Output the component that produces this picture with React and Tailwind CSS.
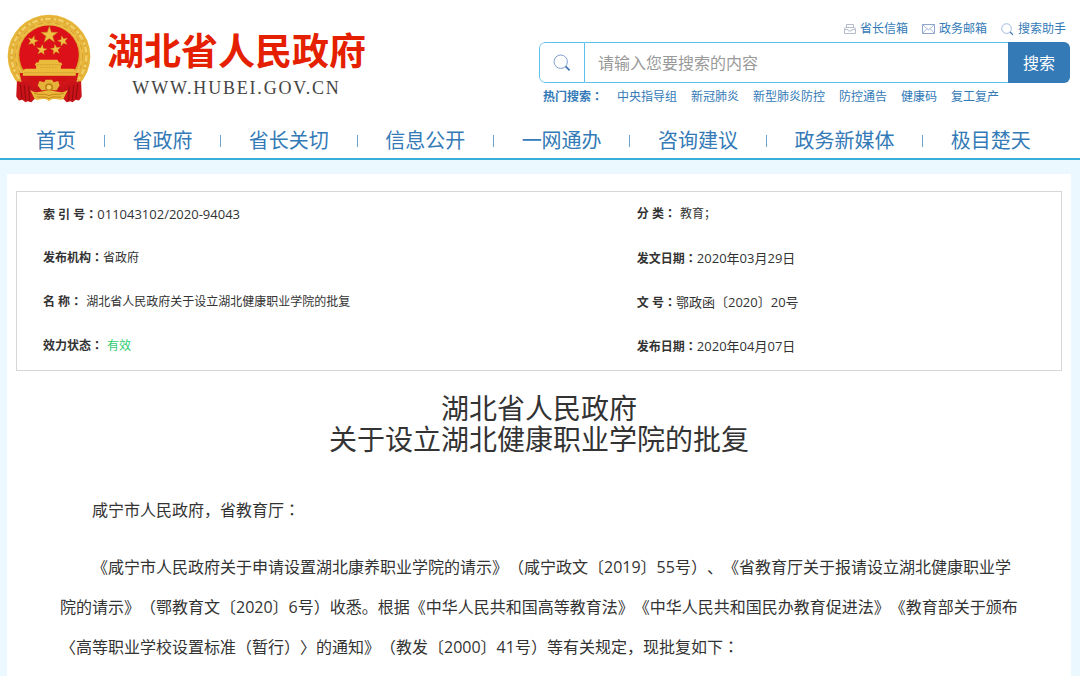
import { useState } from "react";

const NAV_ITEMS = [
    "首页",
    "省政府",
    "省长关切",
    "信息公开",
    "一网通办",
    "咨询建议",
    "政务新媒体",
    "极目楚天",
];

const HOT_WORDS = [
    "中央指导组",
    "新冠肺炎",
    "新型肺炎防控",
    "防控通告",
    "健康码",
    "复工复产",
];

const META = [
    { label: "索 引 号", value: "011043102/2020-94043", numeric: true },
    { label: "分 类", value: "教育；", spaced: true },
    { label: "发布机构", value: "省政府" },
    { label: "发文日期", value: "2020年03月29日", numeric: true },
    {
        label: "名 称",
        value: "湖北省人民政府关于设立湖北健康职业学院的批复",
        spaced: true,
    },
    { label: "文 号", value: "鄂政函〔2020〕20号", numeric: true },
    { label: "效力状态", value: "有效", spaced: true, valid: true },
    { label: "发布日期", value: "2020年04月07日", numeric: true },
];

const STAR =
    "M0-10 2.35-3.24 9.51-3.09 3.8 1.24 5.88 8.09 0 4 -5.88 8.09 -3.8 1.24 -9.51-3.09 -2.35-3.24Z";

// Full-width colon, centred in its em box
function Colon() {
    return (
        <span className="font-['Noto_Sans_CJK_TC','Noto_Sans_CJK_SC',sans-serif] leading-none">
            ：
        </span>
    );
}

function SearchIcon({ className }) {
    return (
        <svg viewBox="0 0 18 18" fill="none" className={className}>
            <circle cx="7.7" cy="7.7" r="6.7" stroke="#7f9fd0" />
            <path d="M12.6 12.4 16.6 16.4" stroke="#3f73b5" strokeWidth="1.7" />
        </svg>
    );
}

function DrawerIcon() {
    return (
        <svg viewBox="0 0 12 12" fill="none" className="size-3">
            <path
                d="M2.5 4V1.5h7V4M1.5 4.5h9M.5 6.5h3.3l.7 1.4h3l.7-1.4h3.3v4H.5z"
                stroke="#b4bccb"
            />
            <path d="M1 4.5.5 6.5M11 4.5l.5 2" stroke="#b4bccb" />
        </svg>
    );
}

function MailIcon() {
    return (
        <svg viewBox="0 0 13 10" fill="none" className="h-[10px] w-[13px]">
            <path d="M.5.5h12v9H.5z" stroke="#8fa6cc" />
            <path
                d="M.8.8 6.5 6 12.2.8M.8 9.2l4-4.6M12.2 9.2l-4-4.6"
                stroke="#8fa6cc"
                strokeWidth="0.8"
            />
        </svg>
    );
}

function Emblem() {
    return (
        <svg
            viewBox="20 27 254 268"
            className="h-[89px] w-[84px] shrink-0"
            role="img"
            aria-label="国徽"
        >
            <defs>
                <radialGradient id="gold" cx="0.5" cy="0.5" r="0.5">
                    <stop offset="0.68" stopColor="#c98f12" />
                    <stop offset="0.78" stopColor="#eec04a" />
                    <stop offset="0.9" stopColor="#e0ab30" />
                    <stop offset="1" stopColor="#e8b93c" />
                </radialGradient>
            </defs>
            <circle cx="147" cy="154" r="125" fill="url(#gold)" />
            {/* Wheat ears */}
            <circle
                cx="147"
                cy="154"
                r="113"
                fill="none"
                stroke="#f2cf68"
                strokeWidth="7"
                strokeDasharray="17 9 8 6"
            />
            <circle
                cx="147"
                cy="154"
                r="101"
                fill="none"
                stroke="#d09c2a"
                strokeWidth="3"
                strokeDasharray="14 12"
            />
            <ellipse cx="147" cy="150" rx="90" ry="89" fill="#dc1018" />
            <path d="M58 205h178l-14 62H72z" fill="#d01519" />
            {/* Stars */}
            <g fill="#efc044" stroke="#bb7311" strokeWidth="0.5">
                <path d={STAR} transform="translate(148 90) scale(2.7)" />
                <path d={STAR} transform="translate(98 108) rotate(15) scale(1.7)" />
                <path d={STAR} transform="translate(189 108) rotate(-15) scale(1.7)" />
                <path d={STAR} transform="translate(125 135) rotate(8) scale(1.7)" />
                <path d={STAR} transform="translate(167 134) rotate(-8) scale(1.7)" />
            </g>
            {/* Gate tower */}
            <path
                d="M118 165h55l4 8h7l3 8-4 2v9h37l8 4v17H68v-17l8-4h32v-9l-4-2 4-8h7z"
                fill="#edbb3c"
            />
            <path
                d="M109 180h75M70 204h158"
                stroke="#cf982a"
                strokeWidth="2"
                fill="none"
            />
            <path d="M120 188h54" stroke="#cf982a" strokeWidth="2" strokeDasharray="5 4" />
            <path d="M80 214h136l-14 14H94z" fill="#cf1116" />
            {/* Drapes */}
            <path
                d="M50 230l28 3 30 15 26-8-8 40-24 4-8 9-12-3-6 3-10-7-10 2-8-12z"
                fill="#c91318"
            />
            <path
                d="M244 230l-28 3-30 15-26-8 8 40 24 4 8 9 12-3 6 3 10-7 10 2 8-12z"
                fill="#c91318"
            />
            <path
                d="M60 238l6 46M72 242l5 46M86 246l2 42M234 238l-6 46M222 242l-5 46M208 246l-2 42"
                stroke="#8f0a0e"
                strokeWidth="3"
                fill="none"
            />
            {/* Cog and wheat stalks */}
            <path
                d="M118 229l14 4 5-8 19 0 5 8 14-4 4 14-9 14h-46l-11-14z"
                fill="#e5b138"
            />
            <circle cx="147" cy="248" r="12" fill="#bd8117" />
            <circle cx="147" cy="248" r="7" fill="#f3cb56" />
            <path
                d="M90 256c20 14 38 2 57 2s37 12 57-2l-14 28c-16 6-28-8-43 6-15-14-27 0-43-6z"
                fill="#e9b83b"
            />
            <path
                d="M102 266c18 8 30-2 45 8 15-10 27 0 45-8M110 277c14 3 26-4 37 6 11-10 23-3 37-6"
                stroke="#bb7a12"
                strokeWidth="2.5"
                fill="none"
            />
        </svg>
    );
}

function SiteHeader() {
    const [keyword, setKeyword] = useState("");

    return (
        <header className="border-b-2 border-[#36aeda] bg-white">
            <div className="flex justify-between gap-4 pr-[10px] pl-[7px]">
                <a href="#" className="flex gap-4 pt-[14px]">
                    <Emblem />
                    <span className="flex flex-col items-center pt-3">
                        <span className="text-[37px] leading-[50px] font-bold whitespace-nowrap text-[#e42000]">
                            湖北省人民政府
                        </span>
                        <span className="font-['Liberation_Serif',serif] text-lg leading-6 tracking-widest text-[#444]">
                            WWW.HUBEI.GOV.CN
                        </span>
                    </span>
                </a>

                <div className="w-[531px] pt-5 text-xs text-[#337ab7]">
                    <div className="flex items-center justify-end gap-[14px] pr-1 leading-[18px]">
                        <a href="#" className="flex items-center gap-1">
                            <DrawerIcon />
                            省长信箱
                        </a>
                        <a href="#" className="flex items-center gap-1">
                            <MailIcon />
                            政务邮箱
                        </a>
                        <a href="#" className="flex items-center gap-1">
                            <SearchIcon className="size-[13px]" />
                            搜索助手
                        </a>
                    </div>

                    {/* Search box */}
                    <form
                        onSubmit={(e) => e.preventDefault()}
                        className="mt-1 flex h-[41px] overflow-hidden rounded-md"
                    >
                        <label
                            htmlFor="keyword"
                            aria-label="搜索"
                            className="flex w-[46px] items-center justify-center rounded-l-md border border-[#5dbfee]"
                        >
                            <SearchIcon className="size-[18px]" />
                        </label>
                        <input
                            id="keyword"
                            type="text"
                            value={keyword}
                            placeholder="请输入您要搜索的内容"
                            onChange={(e) => setKeyword(e.target.value)}
                            className="min-w-0 flex-1 border-y border-[#5dbfee] px-[13px] text-base outline-none placeholder:text-[#999]"
                        />
                        <button
                            type="submit"
                            className="w-[62px] bg-[#337ab7] text-base text-white"
                        >
                            搜索
                        </button>
                    </form>

                    <div className="mt-1 flex items-baseline gap-[14px] pl-1 leading-5">
                        <span className="font-bold">
                            热门搜索
                            <Colon />
                        </span>
                        {HOT_WORDS.map((word) => (
                            <a key={word} href="#">
                                {word}
                            </a>
                        ))}
                    </div>
                </div>
            </div>

            <nav className="mt-5 flex items-center justify-between pr-[49px] pb-[3px] pl-9 text-xl leading-[28px] text-[#337ab7]">
                {NAV_ITEMS.map((item, i) => [
                    i > 0 && (
                        <span
                            key={`${item}-line`}
                            className="h-3 w-px bg-[#6ea4d0]"
                        />
                    ),
                    <a key={item} href="#">
                        {item}
                    </a>,
                ])}
            </nav>
        </header>
    );
}

function MetaBox() {
    return (
        <dl className="grid grid-cols-[7fr_5fr] border border-[#d6d6d6] py-px pl-[26px] text-xs leading-[42px]">
            {META.map(({ label, value, numeric, spaced, valid }) => (
                <div key={label} className="flex h-11 items-baseline">
                    <dt className="font-bold">
                        {label}
                        <Colon />
                    </dt>
                    <dd
                        className={[
                            numeric && "text-[13px]",
                            spaced && "pl-1",
                            valid && "text-[#2ecc71]",
                        ]
                            .filter(Boolean)
                            .join(" ")}
                    >
                        {value}
                    </dd>
                </div>
            ))}
        </dl>
    );
}

export default function App() {
    return (
        <div className="min-h-screen bg-[#ebf8ff] font-['Open_Sans','Noto_Sans_CJK_SC',sans-serif] text-[#333] [text-spacing-trim:space-all]">
            <SiteHeader />

            <div className="pt-[14px] pr-[9px] pl-[7px]">
                <main className="min-h-[502px] bg-white px-[9px] pt-[17px]">
                    <MetaBox />

                    <h1 className="mt-[22px] text-center text-[28px] leading-[31px]">
                        湖北省人民政府
                        <br />
                        关于设立湖北健康职业学院的批复
                    </h1>

                    <div className="mt-[35px] pr-10 pl-11 text-base leading-10">
                        <p className="indent-8">
                            咸宁市人民政府，省教育厅
                            <Colon />
                        </p>
                        <p className="mt-[17px] indent-8">
                            《咸宁市人民政府关于申请设置湖北康养职业学院的请示》（咸宁政文〔2019〕55号）、《省教育厅关于报请设立湖北健康职业学院的请示》（鄂教育文〔2020〕6号）收悉。根据《中华人民共和国高等教育法》《中华人民共和国民办教育促进法》《教育部关于颁布〈高等职业学校设置标准（暂行）〉的通知》（教发〔2000〕41号）等有关规定，现批复如下
                            <Colon />
                        </p>
                    </div>
                </main>
            </div>
        </div>
    );
}
